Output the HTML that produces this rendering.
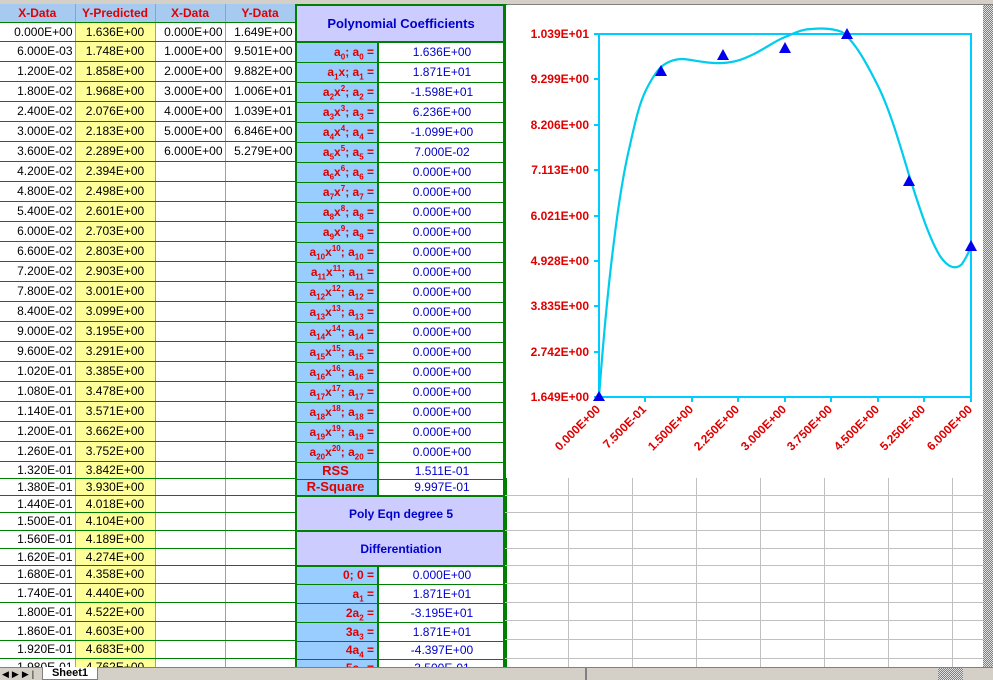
<!DOCTYPE html>
<html><head><meta charset="utf-8"><style>
*{margin:0;padding:0;box-sizing:border-box}
body{width:993px;height:680px;overflow:hidden;background:#fff;font-family:"Liberation Sans",Arial,sans-serif;font-size:12px;position:relative}
#top{position:absolute;left:0;top:0;width:993px;height:5px;background:#d4d0c8;border-bottom:1px solid #808080}
table{border-collapse:collapse;table-layout:fixed;position:absolute}
#L{left:0;top:4px}
#L td{border-bottom:1px solid #008000;border-right:1px solid #a0a0a0;text-align:right;padding:0 2px;white-space:nowrap;overflow:hidden;line-height:12px;color:#000}
#L td.b{background:#ffff99;text-align:center}
#L tr.h td{background:#a6caf0;color:#e00000;font-weight:bold;text-align:center}
#R{left:295px;top:4px;width:210px}
#R td{border:2px solid #008000;border-top-width:1px;border-bottom-width:1px;white-space:nowrap;overflow:hidden;line-height:12px}
#R td.e{background:#99ccff;color:#e00000;font-weight:bold;text-align:right;padding-right:3px}
#R td.f{color:#0000cc;text-align:center;background:#fff}
#R td.t{background:#ccccff;color:#0000cc;font-weight:bold;text-align:center;border-width:2px}
sub,sup{font-size:8px;line-height:0}
#grid{position:absolute;left:505px;top:478px;width:478px;height:189px;background:
repeating-linear-gradient(90deg,transparent 0 63px,#c0c0c0 63px 64px)}
.hl{position:absolute;left:505px;width:478px;height:1px;background:#c0c0c0}
#vs{position:absolute;left:983px;top:5px;width:10px;height:662px;background:repeating-conic-gradient(#808080 0 25%,#e0e0e0 0 50%) 0 0/2px 2px}
#bot{position:absolute;left:0;top:667px;width:993px;height:13px;background:#d4d0c8;border-top:1px solid #808080}
</style></head><body>
<div id="top"></div>
<table id="L" style="width:295px">
<colgroup><col style="width:75px"><col style="width:80px"><col style="width:70px"><col style="width:70px"></colgroup>
<tr class="h" style="height:18px"><td>X-Data</td><td>Y-Predicted</td><td>X-Data</td><td>Y-Data</td></tr>
<tr style="height:19px"><td>0.000E+00</td><td class="b">1.636E+00</td><td>0.000E+00</td><td>1.649E+00</td></tr>
<tr style="height:20px"><td>6.000E-03</td><td class="b">1.748E+00</td><td>1.000E+00</td><td>9.501E+00</td></tr>
<tr style="height:20px"><td>1.200E-02</td><td class="b">1.858E+00</td><td>2.000E+00</td><td>9.882E+00</td></tr>
<tr style="height:20px"><td>1.800E-02</td><td class="b">1.968E+00</td><td>3.000E+00</td><td>1.006E+01</td></tr>
<tr style="height:20px"><td>2.400E-02</td><td class="b">2.076E+00</td><td>4.000E+00</td><td>1.039E+01</td></tr>
<tr style="height:20px"><td>3.000E-02</td><td class="b">2.183E+00</td><td>5.000E+00</td><td>6.846E+00</td></tr>
<tr style="height:20px"><td>3.600E-02</td><td class="b">2.289E+00</td><td>6.000E+00</td><td>5.279E+00</td></tr>
<tr style="height:20px"><td>4.200E-02</td><td class="b">2.394E+00</td><td></td><td></td></tr>
<tr style="height:20px"><td>4.800E-02</td><td class="b">2.498E+00</td><td></td><td></td></tr>
<tr style="height:20px"><td>5.400E-02</td><td class="b">2.601E+00</td><td></td><td></td></tr>
<tr style="height:20px"><td>6.000E-02</td><td class="b">2.703E+00</td><td></td><td></td></tr>
<tr style="height:20px"><td>6.600E-02</td><td class="b">2.803E+00</td><td></td><td></td></tr>
<tr style="height:20px"><td>7.200E-02</td><td class="b">2.903E+00</td><td></td><td></td></tr>
<tr style="height:20px"><td>7.800E-02</td><td class="b">3.001E+00</td><td></td><td></td></tr>
<tr style="height:20px"><td>8.400E-02</td><td class="b">3.099E+00</td><td></td><td></td></tr>
<tr style="height:20px"><td>9.000E-02</td><td class="b">3.195E+00</td><td></td><td></td></tr>
<tr style="height:20px"><td>9.600E-02</td><td class="b">3.291E+00</td><td></td><td></td></tr>
<tr style="height:20px"><td>1.020E-01</td><td class="b">3.385E+00</td><td></td><td></td></tr>
<tr style="height:20px"><td>1.080E-01</td><td class="b">3.478E+00</td><td></td><td></td></tr>
<tr style="height:20px"><td>1.140E-01</td><td class="b">3.571E+00</td><td></td><td></td></tr>
<tr style="height:20px"><td>1.200E-01</td><td class="b">3.662E+00</td><td></td><td></td></tr>
<tr style="height:20px"><td>1.260E-01</td><td class="b">3.752E+00</td><td></td><td></td></tr>
<tr style="height:17px"><td>1.320E-01</td><td class="b">3.842E+00</td><td></td><td></td></tr>
<tr style="height:17px"><td>1.380E-01</td><td class="b">3.930E+00</td><td></td><td></td></tr>
<tr style="height:17px"><td>1.440E-01</td><td class="b">4.018E+00</td><td></td><td></td></tr>
<tr style="height:18px"><td>1.500E-01</td><td class="b">4.104E+00</td><td></td><td></td></tr>
<tr style="height:18px"><td>1.560E-01</td><td class="b">4.189E+00</td><td></td><td></td></tr>
<tr style="height:17px"><td>1.620E-01</td><td class="b">4.274E+00</td><td></td><td></td></tr>
<tr style="height:18px"><td>1.680E-01</td><td class="b">4.358E+00</td><td></td><td></td></tr>
<tr style="height:19px"><td>1.740E-01</td><td class="b">4.440E+00</td><td></td><td></td></tr>
<tr style="height:19px"><td>1.800E-01</td><td class="b">4.522E+00</td><td></td><td></td></tr>
<tr style="height:19px"><td>1.860E-01</td><td class="b">4.603E+00</td><td></td><td></td></tr>
<tr style="height:18px"><td>1.920E-01</td><td class="b">4.683E+00</td><td></td><td></td></tr>
<tr style="height:18px"><td>1.980E-01</td><td class="b">4.762E+00</td><td></td><td></td></tr>
</table>
<table id="R">
<colgroup><col style="width:82px"><col style="width:128px"></colgroup>
<tr style="height:37px"><td class="t" colspan="2" style="font-size:13px">Polynomial Coefficients</td></tr>
<tr style="height:20px"><td class="e">a<sub>0</sub>; a<sub>0</sub> =</td><td class="f">1.636E+00</td></tr>
<tr style="height:20px"><td class="e">a<sub>1</sub>x; a<sub>1</sub> =</td><td class="f">1.871E+01</td></tr>
<tr style="height:20px"><td class="e">a<sub>2</sub>x<sup>2</sup>; a<sub>2</sub> =</td><td class="f">-1.598E+01</td></tr>
<tr style="height:20px"><td class="e">a<sub>3</sub>x<sup>3</sup>; a<sub>3</sub> =</td><td class="f">6.236E+00</td></tr>
<tr style="height:20px"><td class="e">a<sub>4</sub>x<sup>4</sup>; a<sub>4</sub> =</td><td class="f">-1.099E+00</td></tr>
<tr style="height:20px"><td class="e">a<sub>5</sub>x<sup>5</sup>; a<sub>5</sub> =</td><td class="f">7.000E-02</td></tr>
<tr style="height:20px"><td class="e">a<sub>6</sub>x<sup>6</sup>; a<sub>6</sub> =</td><td class="f">0.000E+00</td></tr>
<tr style="height:20px"><td class="e">a<sub>7</sub>x<sup>7</sup>; a<sub>7</sub> =</td><td class="f">0.000E+00</td></tr>
<tr style="height:20px"><td class="e">a<sub>8</sub>x<sup>8</sup>; a<sub>8</sub> =</td><td class="f">0.000E+00</td></tr>
<tr style="height:20px"><td class="e">a<sub>9</sub>x<sup>9</sup>; a<sub>9</sub> =</td><td class="f">0.000E+00</td></tr>
<tr style="height:20px"><td class="e">a<sub>10</sub>x<sup>10</sup>; a<sub>10</sub> =</td><td class="f">0.000E+00</td></tr>
<tr style="height:20px"><td class="e">a<sub>11</sub>x<sup>11</sup>; a<sub>11</sub> =</td><td class="f">0.000E+00</td></tr>
<tr style="height:20px"><td class="e">a<sub>12</sub>x<sup>12</sup>; a<sub>12</sub> =</td><td class="f">0.000E+00</td></tr>
<tr style="height:20px"><td class="e">a<sub>13</sub>x<sup>13</sup>; a<sub>13</sub> =</td><td class="f">0.000E+00</td></tr>
<tr style="height:20px"><td class="e">a<sub>14</sub>x<sup>14</sup>; a<sub>14</sub> =</td><td class="f">0.000E+00</td></tr>
<tr style="height:20px"><td class="e">a<sub>15</sub>x<sup>15</sup>; a<sub>15</sub> =</td><td class="f">0.000E+00</td></tr>
<tr style="height:20px"><td class="e">a<sub>16</sub>x<sup>16</sup>; a<sub>16</sub> =</td><td class="f">0.000E+00</td></tr>
<tr style="height:20px"><td class="e">a<sub>17</sub>x<sup>17</sup>; a<sub>17</sub> =</td><td class="f">0.000E+00</td></tr>
<tr style="height:20px"><td class="e">a<sub>18</sub>x<sup>18</sup>; a<sub>18</sub> =</td><td class="f">0.000E+00</td></tr>
<tr style="height:20px"><td class="e">a<sub>19</sub>x<sup>19</sup>; a<sub>19</sub> =</td><td class="f">0.000E+00</td></tr>
<tr style="height:20px"><td class="e">a<sub>20</sub>x<sup>20</sup>; a<sub>20</sub> =</td><td class="f">0.000E+00</td></tr>
<tr style="height:17px"><td class="e" style="text-align:center;font-size:13px">RSS</td><td class="f">1.511E-01</td></tr>
<tr style="height:17px"><td class="e" style="text-align:center;font-size:13px">R-Square</td><td class="f">9.997E-01</td></tr>
<tr style="height:35px"><td class="t" colspan="2">Poly Eqn degree 5</td></tr>
<tr style="height:35px"><td class="t" colspan="2">Differentiation</td></tr>
<tr style="height:18px"><td class="e">0; 0 =</td><td class="f">0.000E+00</td></tr>
<tr style="height:19px"><td class="e">a<sub>1</sub> =</td><td class="f">1.871E+01</td></tr>
<tr style="height:19px"><td class="e">2a<sub>2</sub> =</td><td class="f">-3.195E+01</td></tr>
<tr style="height:19px"><td class="e">3a<sub>3</sub> =</td><td class="f">1.871E+01</td></tr>
<tr style="height:18px"><td class="e">4a<sub>4</sub> =</td><td class="f">-4.397E+00</td></tr>
<tr style="height:18px"><td class="e">5a<sub>5</sub> =</td><td class="f">3.500E-01</td></tr>
</table>
<div id="grid"></div>
<div class="hl" style="top:495px"></div><div class="hl" style="top:512px"></div><div class="hl" style="top:530px"></div><div class="hl" style="top:548px"></div><div class="hl" style="top:565px"></div><div class="hl" style="top:583px"></div><div class="hl" style="top:602px"></div><div class="hl" style="top:620px"></div><div class="hl" style="top:639px"></div><div class="hl" style="top:658px"></div>
<svg style="position:absolute;left:0;top:0" width="993" height="680" font-family="Liberation Sans,Arial,sans-serif">
<rect x="506" y="5" width="477" height="473" fill="#fff"/>
<rect x="599" y="34" width="372" height="363" fill="none" stroke="#00ccff" stroke-width="2"/>
<g stroke="#00ccff" stroke-width="2">
<line x1="594" y1="34" x2="599" y2="34"/><line x1="594" y1="79" x2="599" y2="79"/><line x1="594" y1="125" x2="599" y2="125"/><line x1="594" y1="170" x2="599" y2="170"/><line x1="594" y1="216" x2="599" y2="216"/><line x1="594" y1="261" x2="599" y2="261"/><line x1="594" y1="306" x2="599" y2="306"/><line x1="594" y1="352" x2="599" y2="352"/><line x1="594" y1="397" x2="599" y2="397"/>
<line x1="645" y1="397" x2="645" y2="402"/><line x1="692" y1="397" x2="692" y2="402"/><line x1="738" y1="397" x2="738" y2="402"/><line x1="785" y1="397" x2="785" y2="402"/><line x1="831" y1="397" x2="831" y2="402"/><line x1="878" y1="397" x2="878" y2="402"/><line x1="924" y1="397" x2="924" y2="402"/><line x1="971" y1="397" x2="971" y2="402"/>
</g>
<g fill="#e00000" font-size="12" font-weight="bold" text-anchor="end">
<text x="589" y="38">1.039E+01</text><text x="589" y="83">9.299E+00</text><text x="589" y="129">8.206E+00</text><text x="589" y="174">7.113E+00</text><text x="589" y="220">6.021E+00</text><text x="589" y="265">4.928E+00</text><text x="589" y="310">3.835E+00</text><text x="589" y="356">2.742E+00</text><text x="589" y="401">1.649E+00</text>
<text transform="translate(601,410) rotate(-45)">0.000E+00</text>
<text transform="translate(647,410) rotate(-45)">7.500E-01</text>
<text transform="translate(694,410) rotate(-45)">1.500E+00</text>
<text transform="translate(740,410) rotate(-45)">2.250E+00</text>
<text transform="translate(787,410) rotate(-45)">3.000E+00</text>
<text transform="translate(833,410) rotate(-45)">3.750E+00</text>
<text transform="translate(880,410) rotate(-45)">4.500E+00</text>
<text transform="translate(926,410) rotate(-45)">5.250E+00</text>
<text transform="translate(973,410) rotate(-45)">6.000E+00</text>
</g>
<path d="M599,397 C604,330 609,280 614,241 C619,200 624,170 630,145 C636,118 640,102 646,90 C652,78 656,72 661,67 C668,61 675,59 683,59 C695,60 708,64 723,63 C738,62 745,58 754,54 C766,48 775,41 785,37 C795,33 802,29 812,29 C822,28 832,28 842,32 C855,42 866,62 878,86 C890,110 900,145 909,175 C920,210 930,240 940,256 C948,268 956,270 962,264 C966,258 969,252 971,246" fill="none" stroke="#00ccee" stroke-width="2.2"/>
<g fill="#0000ee">
<polygon points="599,391 593,401 605,401"/><polygon points="661,65 655,76 667,76"/><polygon points="723,49 717,60 729,60"/><polygon points="785,42 779,53 791,53"/><polygon points="847,28 841,39 853,39"/><polygon points="909,175 903,186 915,186"/><polygon points="971,240 965,251 977,251"/>
</g>
<line x1="504" y1="4" x2="504" y2="667" stroke="#008000" stroke-width="2"/>
</svg>
<div id="vs"></div>
<div id="bot">
<div style="position:absolute;left:2px;top:1px;font-size:9px;color:#000;letter-spacing:3px">◀▶▶|</div>
<div style="position:absolute;left:42px;top:-1px;width:56px;height:13px;background:#fff;border:1px solid #808080;border-top:none;font-weight:bold;font-size:11px;text-align:center;line-height:12px">Sheet1</div>
<div style="position:absolute;left:585px;top:0;width:400px;height:12px;border-left:2px solid #808080;background:#d4d0c8"></div>
<div style="position:absolute;left:938px;top:0;width:25px;height:12px;background:repeating-conic-gradient(#808080 0 25%,#e0e0e0 0 50%) 0 0/2px 2px"></div>
</div>
</body></html>
